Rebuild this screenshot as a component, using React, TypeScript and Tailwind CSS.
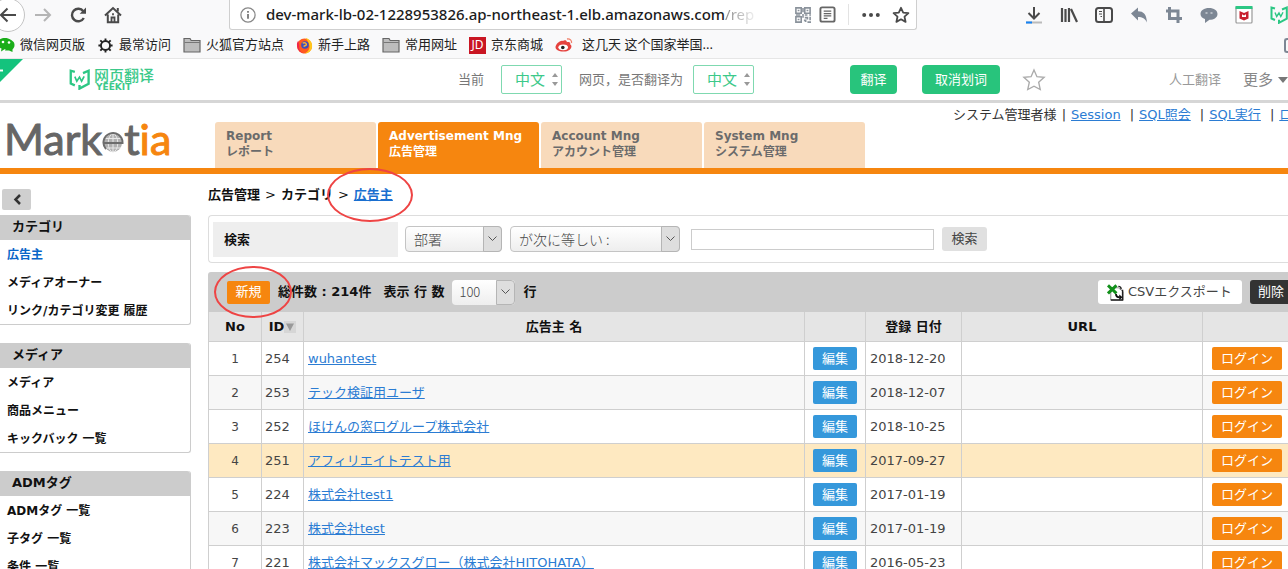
import type { ReactNode } from "react";

const ui = "font-['Noto_Sans','Noto_Sans_CJK_SC',sans-serif]";
const site = "font-['DejaVu_Sans','Noto_Sans_CJK_JP',sans-serif]";
const light = "font-['Noto_Sans_CJK_JP',sans-serif] font-light";

const tabs = [
  { en: "Report", ja: "レポート" },
  { en: "Advertisement Mng", ja: "広告管理", active: true },
  { en: "Account Mng", ja: "アカウント管理" },
  { en: "System Mng", ja: "システム管理" },
];

const sections = [
  { title: "カテゴリ", items: ["広告主", "メディアオーナー", "リンク/カテゴリ変更 履歴"] },
  { title: "メディア", items: ["メディア", "商品メニュー", "キックバック 一覧"] },
  { title: "ADMタグ", items: ["ADMタグ 一覧", "子タグ 一覧", "条件 一覧"] },
];

const rows = [
  { id: 254, name: "wuhantest", date: "2018-12-20" },
  { id: 253, name: "テック検証用ユーザ", date: "2018-12-07" },
  { id: 252, name: "ほけんの窓口グループ株式会社", date: "2018-10-25" },
  { id: 251, name: "アフィリエイトテスト用", date: "2017-09-27", hot: true },
  { id: 224, name: "株式会社test1", date: "2017-01-19" },
  { id: 223, name: "株式会社test", date: "2017-01-19" },
  { id: 221, name: "株式会社マックスグロー（株式会社HITOHATA）", date: "2016-05-23" },
];

function Icon({ children, size = 18 }: { children: ReactNode; size?: number }) {
  return (
    <svg width={size} height={size} viewBox="0 0 18 18" fill="none" stroke="currentColor" strokeWidth="2" className="shrink-0" aria-hidden="true">
      {children}
    </svg>
  );
}

function YeekitMark({ size }: { size: number }) {
  return (
    <Icon size={size}>
      <path d="M5 2.500 1.500 1.500v11L5 14M12 3.500l4.800-2v11.200L9 16.800v-3" stroke="#2cc784" strokeWidth="2" />
      <path d="m5 6.500 1.700 4L9 7l1.800 3.500 2.200-4.200" stroke="#2cc784" strokeWidth="1.400" />
    </Icon>
  );
}

function FolderIcon() {
  return (
    <Icon>
      <path d="M1 16V2.500h6l1.200 2H17V16z" fill="#bdbdbd" stroke="#666" strokeWidth="1.200" />
      <path d="M1.500 6.500H17" stroke="#777" strokeWidth="1" />
    </Icon>
  );
}

function BrowserToolbar() {
  return (
    <div className="flex h-[30px] items-center text-[#4a4a4a]">
      <button aria-label="Back" className="-ml-[9px] flex size-[34px] shrink-0 items-center justify-center rounded-full border border-[#c4c4c4] bg-white">
        <Icon><path d="M17 9H2M8.500 2.500 2 9l6.500 6.500" /></Icon>
      </button>
      <button aria-label="Forward" className="ml-[9px] text-[#b5b5b5]">
        <Icon><path d="M1 9h15M10 3l6 6-6 6" /></Icon>
      </button>
      <button aria-label="Reload" className="ml-[17px]">
        <Icon>
          <path d="M14.300 5.200A6.300 6.300 0 1 0 14.800 12" strokeWidth="2.400" />
          <path d="M17 1.500v6.300h-6.300z" fill="currentColor" stroke="none" />
        </Icon>
      </button>
      <button aria-label="Home" className="ml-[17px]">
        <Icon>
          <path d="M1 9.500 9 2l8 7.500M3.800 8.500v7.700h10.400V8.500" />
          <path d="M7.500 16v-4.500h3V16M9 7.200v2" strokeWidth="1.800" />
          <path d="M13.800 2v3.500" />
        </Icon>
      </button>

      <div className="ml-[107px] flex h-full flex-1 items-center rounded-b-[3px] border border-t-0 border-[#cfcfcf] bg-white pr-[6px] pl-[10px]">
        <Icon size={16}>
          <circle cx="9" cy="9" r="8" stroke="#888" strokeWidth="1.400" />
          <path d="M9 8v5.200M9 4.600v2" stroke="#777" />
        </Icon>
        <p className={`${ui} ml-[10px] flex-1 overflow-hidden text-[15px] font-medium whitespace-nowrap text-[#1c1c1c]`}>
          dev-mark-lb-02-1228953826.ap-northeast-1.elb.amazonaws.com
          <span className="bg-linear-to-r from-[#888] to-[#eee] bg-clip-text font-normal text-transparent">/rep</span>
        </p>
        <button aria-label="QR code" className="text-[#8a929b]">
          <Icon size={16}>
            <path d="M1 1h6v6H1zM11 1h6v6h-6zM1 11h6v6H1z" strokeWidth="1.800" />
            <path d="M3 4h2M13 4h2M3 14h2M9 1v5M9 8v4M1 9h5M11 9h3M16 9h2M11 12h3v2M17 11v4M10 15h2v2M14 17h4" strokeWidth="1.800" />
          </Icon>
        </button>
        <button aria-label="Reader view" className="ml-[8px] text-[#666]">
          <Icon size={17}>
            <rect x="1.500" y="1.500" width="15" height="15" rx="1.800" />
            <path d="M5 5.500h8M5 8h8M5 10.500h8M5 13h4" strokeWidth="1.300" />
          </Icon>
        </button>
        <span className="ml-[12px] h-[21px] w-px bg-[#e3e3e3]" />
        <button aria-label="Page actions" className="ml-[13px]">
          <Icon>
            <g fill="currentColor" stroke="none">
              <circle cx="2.200" cy="9" r="2" /><circle cx="9" cy="9" r="2" /><circle cx="15.800" cy="9" r="2" />
            </g>
          </Icon>
        </button>
        <button aria-label="Bookmark" className="ml-[12px]">
          <Icon><path d="m9 1.800 2.200 4.800 5.200.6-3.900 3.500 1.100 5.200L9 13.300l-4.600 2.600 1.100-5.200-3.900-3.500 5.200-.6z" strokeWidth="1.800" strokeLinejoin="round" /></Icon>
        </button>
      </div>

      <div className="ml-[108px] flex shrink-0 gap-[17px] text-[#4a4a4a]">
        <button aria-label="Downloads">
          <Icon>
            <path d="M9 1v11M3.500 7 9 12.500 14.500 7" />
            <path d="M1 16.500h16" stroke="#bbb" />
            <path d="M1 16.500h6" stroke="#1583f5" />
          </Icon>
        </button>
        <button aria-label="Library">
          <Icon><path d="M2 2v14M5.500 3v13M9 2v14M11 3l6 13" strokeWidth="2.200" /></Icon>
        </button>
        <button aria-label="Sidebar">
          <Icon>
            <rect x="1" y="2" width="16" height="14" rx="2.500" />
            <path d="M9 2v14" strokeWidth="1.600" />
            <path d="M4 5.500h3M4 8h3M5.500 10.500H7" strokeWidth="1.200" />
          </Icon>
        </button>
        <button aria-label="Undo" className="text-[#7d8794]">
          <Icon><path d="M1 7.500 8 1.500v3.700c5.500 0 8.500 3 9 11.300-2-4-4.500-5.500-9-5.500v3.500z" fill="currentColor" stroke="none" /></Icon>
        </button>
        <button aria-label="Crop" className="text-[#7d8794]">
          <Icon><path d="M4.500 1v11.500H17M1 5h12v12" strokeWidth="3" /></Icon>
        </button>
        <button aria-label="Chat" className="text-[#7d8794]">
          <Icon>
            <path d="M9 2c5 0 8.500 2.500 8.500 6S14 13.800 9.500 13.800L5 17v-4C2.500 12.300.5 10.500.5 8 .5 4.500 4 2 9 2z" fill="currentColor" stroke="none" />
            <path d="M5.500 7h2M10.500 7h2" stroke="#c9ced4" strokeWidth="1.600" />
          </Icon>
        </button>
        <button aria-label="McAfee">
          <Icon>
            <rect x="1" y="1" width="16" height="16" rx="1" fill="#fff" stroke="#999" strokeWidth="1.200" />
            <path d="M.5 1.500h17" stroke="#2cc784" strokeWidth="3" />
            <path d="m4.500 5 4.500 2 4.500-2v7.500L9 14.500l-4.500-2z" fill="#c8202f" stroke="none" />
            <path d="M7 8.300v2.700h4V8.300L9 9.500z" fill="#fff" stroke="none" />
          </Icon>
        </button>
        <button aria-label="Yeekit"><YeekitMark size={18} /></button>
      </div>
    </div>
  );
}

function Bookmark({ icon, label }: { icon: ReactNode; label: string }) {
  return (
    <a href="#" className="flex shrink-0 items-center gap-[5px]">
      {icon}
      {label}
    </a>
  );
}

function BookmarksBar() {
  return (
    <nav aria-label="Bookmarks" className={`${ui} -ml-[3px] flex h-[29px] items-center gap-[12px] border-b border-[#e6e6e6] pt-[2px] text-[13px] text-[#222]`}>
      <Bookmark label="微信网页版" icon={
        <Icon>
          <path d="M8 2c4.500 0 7.500 2.300 7.500 5.500S12.500 13 8 13l-4 2.500.5-3C2 11.500.5 9.800.5 7.500.5 4.300 3.500 2 8 2z" fill="#1aad19" stroke="none" />
          <path d="M11.500 4c4 0 6 2 6 5 0 2-.8 3.500-2 4.400V16L12 14.500H8z" fill="#1aad19" stroke="none" />
          <circle cx="6" cy="6" r="1.300" fill="#fff" stroke="none" /><circle cx="12" cy="6.500" r="1.300" fill="#fff" stroke="none" />
        </Icon>
      } />
      <Bookmark label="最常访问" icon={
        <Icon size={17}>
          <circle cx="9" cy="9" r="4.800" />
          <path d="M9 1.500V4M9 14v2.500M1.500 9H4M14 9h2.500M3.500 3.500l2 2M12.500 12.500l2 2M14.500 3.500l-2 2M5.500 12.500l-2 2" />
        </Icon>
      } />
      <Bookmark label="火狐官方站点" icon={<FolderIcon />} />
      <Bookmark label="新手上路" icon={
        <Icon size={17}>
          <circle cx="9" cy="9.500" r="8" fill="#ff5a1f" stroke="none" />
          <path d="M10 1c5 1 7.500 5 7 9.500-.5 4-4 7-8 7 4-2 6-5 5-9-.5-3-2-5-4-7.500z" fill="#ffc61a" stroke="none" />
          <path d="M1 8c0 5 3 9 8 9.500-4-1-6-4-5.500-8L2.500 4C1.500 5 1 6.500 1 8z" fill="#f0264a" stroke="none" />
          <circle cx="9.500" cy="8.500" r="4" fill="#3a4fc0" stroke="none" />
          <path d="M7 6.500c2-1 4 0 4 1.500S9 9 8 10" stroke="#ffb02e" strokeWidth="1.500" />
        </Icon>
      } />
      <Bookmark label="常用网址" icon={<FolderIcon />} />
      <Bookmark label="京东商城" icon={
        <span className="flex size-[17px] items-center justify-center bg-[#c91623] text-[12px] leading-none text-white">JD</span>
      } />
      <Bookmark label="这几天 这个国家举国..." icon={
        <span className="pr-[4px]">
          <Icon>
            <path d="M8 5c1-1 4-1 3.800 1.200 2.500-.5 4 .5 3.300 2 3 1.500 1 7.300-6.600 7.300C3.500 15.500.5 13.500.5 11.200.5 8.500 5 3.800 8 5z" fill="#e5423e" stroke="none" />
            <ellipse cx="8.200" cy="11.300" rx="4.800" ry="2.900" fill="#fff" stroke="none" />
            <circle cx="7.800" cy="11.500" r="1.800" fill="#222" stroke="none" />
            <path d="M12 3c3-.5 5 1.500 4.500 4" stroke="#f0806a" strokeWidth="1.300" />
          </Icon>
        </span>
      } />
      <span className="ml-auto h-[15px] w-[4px] rounded-l-[3px] border-2 border-r-0 border-[#7d8794]" />
    </nav>
  );
}

function LangSelect({ label }: { label: string }) {
  return (
    <span className="relative flex">
      <select aria-label={label} className="h-[29px] w-[61px] appearance-none rounded-[2px] border border-[#7fd9b0] bg-white pl-[13px] text-[15px] text-[#3cc98a]">
        <option>中文</option>
      </select>
      <svg className="pointer-events-none absolute top-[8px] right-[4px]" width="6" height="13" viewBox="0 0 6 13" fill="#999" aria-hidden="true">
        <path d="M3 0 6 4H0zM3 13 0 9h6z" />
      </svg>
    </span>
  );
}

function TranslateBar() {
  return (
    <div className={`${ui} relative flex h-[44px] items-center border-b-[3px] border-[#d6d6d6] bg-white pl-[69px] text-[13px] text-[#777]`}>
      <svg className="absolute top-0 left-0" width="23" height="23" viewBox="0 0 23 23" aria-hidden="true">
        <path d="M0 0h23L0 23z" fill="#14c37d" />
        <path d="M0 11.500h3" stroke="#fff" strokeWidth="2" />
      </svg>
      <YeekitMark size={21} />
      <div className="ml-[4px] w-[260px] text-[#3cc98a]">
        <p className="text-[15px] leading-[14px] font-medium">网页翻译</p>
        <p className="pl-[2px] font-['DejaVu_Sans',sans-serif] text-[9px] leading-[10px] font-bold">YEEKIT</p>
      </div>
      <span className="ml-[104px] w-[43px] shrink-0">当前</span>
      <LangSelect label="当前" />
      <span className="mx-[17px] w-[97px] shrink-0 whitespace-nowrap">网页，是否翻译为</span>
      <LangSelect label="翻译为" />
      <button className="ml-[96px] h-[29px] w-[47px] shrink-0 rounded-[4px] bg-[#28c47c] text-white">翻译</button>
      <button className="ml-[25px] h-[29px] w-[78px] shrink-0 rounded-[4px] bg-[#28c47c] text-white">取消划词</button>
      <button aria-label="收藏" className="ml-[22px] text-[#aaa]">
        <Icon size={24}><path d="m9 1.500 2.200 5 5.400.5-4.100 3.600 1.200 5.600L9 13.700l-4.700 2.500 1.200-5.600L1.400 7l5.400-.5z" strokeWidth="1" /></Icon>
      </button>
      <a href="#" className="ml-auto shrink-0 text-[#999]">人工翻译</a>
      <a href="#" className="ml-[22px] flex shrink-0 items-center gap-[5px] text-[15px] text-[#888]">
        更多
        <svg width="10" height="6" viewBox="0 0 10 6" fill="#777" aria-hidden="true"><path d="M0 0h10L5 6z" /></svg>
      </a>
    </div>
  );
}

function MarketiaLogo() {
  return (
    <h1 className="flex w-[211px] items-end pb-[8px] font-['Lato',sans-serif] text-[43px] leading-[43px] text-[#666] [-webkit-text-stroke:1px]">
      Mark
      <svg width="22" height="22" viewBox="0 0 22 22" className="mb-[6px]" role="img" aria-label="e">
        <circle cx="11" cy="11" r="9" fill="#b0b0b0" />
        <path d="M11 2v18M3.500 6.500h15M3.500 16h15" stroke="#e8e8e8" strokeWidth="1" />
        <ellipse cx="11" cy="11" rx="4.800" ry="9" fill="none" stroke="#e8e8e8" />
        <path d="M4 17a9.500 9.500 0 1 1 16.500-6H2" fill="none" stroke="#6c6c6c" strokeWidth="2" />
      </svg>
      t<span className="text-[#f6860f]">ia</span>
    </h1>
  );
}

function SiteHeader() {
  return (
    <header className="flex h-[71px] border-b-[6px] border-[#f6860f] pl-[4px]">
      <MarketiaLogo />
      <nav className="flex shrink-0 items-end gap-[2px]">
        {tabs.map((tab) => (
          <a
            key={tab.en}
            href="#"
            className={`h-[46px] w-[161px] rounded-t-[3px] pt-[6px] pl-[11px] text-[12px] leading-[16px] font-bold whitespace-nowrap ${tab.active ? "bg-[#f6860f] text-white" : "bg-[#f8dabb] text-[#6b6b6b]"}`}
          >
            {tab.en}
            <br />
            {tab.ja}
          </a>
        ))}
      </nav>
      <div className="flex flex-1 gap-[5px] overflow-hidden pt-[3px] pl-[88px] text-[13px] leading-[18px] whitespace-nowrap text-[#333]">
        <span>システム管理者様</span>|
        <a href="#" className="mr-[4px] text-[#2b7cd3] underline">Session</a>|
        <a href="#" className="mr-[4px] text-[#2b7cd3] underline">SQL照会</a>|
        <a href="#" className="mr-[4px] text-[#2b7cd3] underline">SQL実行</a>|
        <a href="#" className="text-[#2b7cd3] underline">ログアウト</a>
      </div>
    </header>
  );
}

function Sidebar() {
  return (
    <aside className="w-[191px] shrink-0 pt-[15px]">
      <button aria-label="Collapse" className="ml-[2px] flex h-[21px] w-[29px] items-center justify-center rounded-[2px] bg-[#cfcfcf] text-[#333]">
        <svg width="8" height="11" viewBox="0 0 8 11" fill="none" stroke="currentColor" strokeWidth="2.500" aria-hidden="true"><path d="M7 1 2.500 5.500 7 10" /></svg>
      </button>
      <div className="mt-[5px] flex flex-col gap-[18px]">
        {sections.map((s) => (
          <section key={s.title} className="rounded-r-[3px] border-r border-b border-[#ccc] font-bold whitespace-nowrap">
            <h2 className="h-[25px] rounded-tr-[3px] bg-[#cccccc] pl-[12px] text-[13px] leading-[24px] text-[#111]">{s.title}</h2>
            <ul className="text-[12px] leading-[30px]">
              {s.items.map((item) => (
                <li key={item} className="h-[28px] pl-[7px]">
                  <a href="#" className={item === "広告主" ? "text-[#0a66c8]" : "text-[#111]"}>{item}</a>
                </li>
              ))}
            </ul>
          </section>
        ))}
      </div>
    </aside>
  );
}

function SelectArrow() {
  return (
    <span className="pointer-events-none absolute inset-y-0 right-0 flex w-[19px] items-center justify-center rounded-r-[4px] border border-[#b5b5b5] bg-[#dedede]">
      <svg width="9" height="6" viewBox="0 0 9 6" fill="none" stroke="#555" aria-hidden="true"><path d="m.5.5 4 4 4-4" /></svg>
    </span>
  );
}

function Picker({ label, value, width }: { label: string; value: string; width: string }) {
  return (
    <span className={`relative flex shrink-0 ${width}`}>
      <select aria-label={label} className={`${light} h-[26px] w-full appearance-none rounded-[4px] border border-[#c4c4c4] bg-linear-to-b from-white to-[#eeeeee] pl-[8px] text-[14px] text-[#444]`}>
        <option>{value}</option>
      </select>
      <SelectArrow />
    </span>
  );
}

function SearchBox() {
  return (
    <form className="flex h-[48px] items-center rounded-l-[4px] border border-r-0 border-[#dddddd] pl-[4px]">
      <label htmlFor="keyword" className="h-[35px] w-[185px] shrink-0 bg-[#eeeeee] pl-[11px] text-[13px] leading-[35px] font-bold text-[#111]">検索</label>
      <div className="ml-[7px] flex flex-1 items-center gap-[8px]">
        <Picker label="項目" value="部署" width="w-[97px]" />
        <Picker label="条件" value="が次に等しい :" width="w-[170px]" />
        <input id="keyword" className="ml-[3px] h-[21px] w-[243px] border border-[#cccccc] bg-white px-1 text-[13px]" />
        <button type="button" className="h-[24px] w-[45px] rounded-[3px] bg-[#e0e0e0] text-[13px] text-[#444]">検索</button>
      </div>
    </form>
  );
}

function ListToolbar() {
  return (
    <div className="flex h-[40px] items-center rounded-tl-[3px] bg-[#cccccc] pl-[19px] text-[13px] font-bold whitespace-nowrap text-[#111]">
      <span className="relative">
        <button className="h-[23px] w-[43px] rounded-[2px] bg-[#f6860f] font-normal text-white">新規</button>
        <span className="pointer-events-none absolute -top-[15px] -left-[13px] z-10 h-[52px] w-[78px] rounded-[50%] border-2 border-[#ee4444]" />
      </span>
      <span className="ml-[8px]">総件数 : 214件</span>
      <label htmlFor="pagesize" className="mx-[8px] pl-[4px]">表示 行 数</label>
      <span className="relative flex w-[63px]">
        <select id="pagesize" className={`${light} h-[25px] w-full appearance-none rounded-[4px] bg-linear-to-b from-white to-[#eeeeee] pl-[7px] text-[13px] text-[#444]`}>
          <option>100</option>
        </select>
        <SelectArrow />
      </span>
      <span className="ml-[8px]">行</span>
      <button className="ml-auto flex h-[24px] w-[144px] shrink-0 items-center gap-[4px] rounded-[3px] bg-white pl-[9px] font-normal text-[#444]">
        <Icon size={17}>
          <path d="M4 4h8l5 4v9H4z" fill="#fff" stroke="#888" strokeWidth="1" />
          <path d="M12 2.500c2 0 3 1 3 3M16.500 6v11H4" stroke="#222" strokeWidth="1.500" />
          <path d="M9.500 10.500c0 2.500 1.500 3.500 4 3.500" stroke="#111" strokeWidth="2" />
          <path d="m13 11 3.500 3-3.500 3z" fill="#111" stroke="none" />
          <path d="m1 1.500 9 8.500M10 1.500 1 10" stroke="#12901b" strokeWidth="3.200" />
        </Icon>
        CSVエクスポート
      </button>
      <button className="ml-[8px] h-[24px] w-[38px] shrink-0 rounded-l-[3px] bg-[#333333] pl-[4px] font-normal text-white">削除</button>
    </div>
  );
}

function AdvertiserTable() {
  const cell = "border-b border-l border-[#cfcfcf]";
  return (
    <table className="w-full table-fixed border-separate border-spacing-0 text-[13px] text-[#444]">
      <colgroup>
        <col className="w-[53px]" />
        <col className="w-[42px]" />
        <col />
        <col className="w-[61px]" />
        <col className="w-[96px]" />
        <col className="w-[241px]" />
        <col className="w-[86px]" />
      </colgroup>
      <thead>
        <tr className="h-[30px] bg-[#e5e5e5] text-[#111]">
          <th className={cell}>No</th>
          <th className={cell}>
            <span className="flex items-center justify-center">
              ID
              <svg width="12" height="12" viewBox="0 0 12 12" aria-hidden="true">
                <path d="M0 0h12v12H0z" fill="#d6d6d6" />
                <path d="M2 2.500h8L6 10z" fill="#999" />
              </svg>
            </span>
          </th>
          <th className={cell}>広告主 名</th>
          <th className={cell} />
          <th className={cell}>登録 日付</th>
          <th className={cell}>URL</th>
          <th className={cell} />
        </tr>
      </thead>
      <tbody>
        {rows.map((row, i) => (
          <tr key={row.id} className={`h-[34px] ${row.hot ? "bg-[#fee9c1]" : i % 2 ? "bg-[#f7f7f7]" : "bg-white"}`}>
            <td className={`${cell} text-center text-[12px]`}>{i + 1}</td>
            <td className={`${cell} pl-[3px]`}>{row.id}</td>
            <td className={`${cell} pl-[4px] whitespace-nowrap`}>
              <a href="#" className="text-[#2b7cd3] underline">{row.name}</a>
            </td>
            <td className={`${cell} text-center`}>
              <button className="mx-auto block h-[23px] w-[44px] rounded-[2px] bg-[#3598db] text-white">編集</button>
            </td>
            <td className={`${cell} pl-[4px]`}>{row.date}</td>
            <td className={cell} />
            <td className={`${cell} pl-[9px]`}>
              <button className="block h-[23px] w-[70px] rounded-[2px] bg-[#f6860f] text-white">ログイン</button>
            </td>
          </tr>
        ))}
      </tbody>
    </table>
  );
}

export default function App() {
  return (
    <div className="flex h-screen flex-col overflow-hidden bg-[#f9f9fa]">
      <BrowserToolbar />
      <BookmarksBar />
      <TranslateBar />
      <div className={`${site} min-h-0 flex-1 bg-white`}>
        <SiteHeader />
        <div className="flex">
          <Sidebar />
          <main className="min-w-0 flex-1 pl-[17px]">
            <div className="flex h-[41px] items-center gap-[5px] text-[13px] font-bold text-[#111]">
              <span>広告管理</span>
              <span className="font-normal">&gt;</span>
              <span>カテゴリ</span>
              <span className="font-normal">&gt;</span>
              <span className="relative">
                <a href="#" className="text-[#1a6fd0] underline">広告主</a>
                <span className="pointer-events-none absolute -top-[17px] -left-[27px] z-10 h-[54px] w-[86px] rounded-[50%] border-2 border-[#ee4444]" />
              </span>
            </div>
            <SearchBox />
            <div className="mt-[9px]">
              <ListToolbar />
              <AdvertiserTable />
            </div>
          </main>
        </div>
      </div>
    </div>
  );
}
